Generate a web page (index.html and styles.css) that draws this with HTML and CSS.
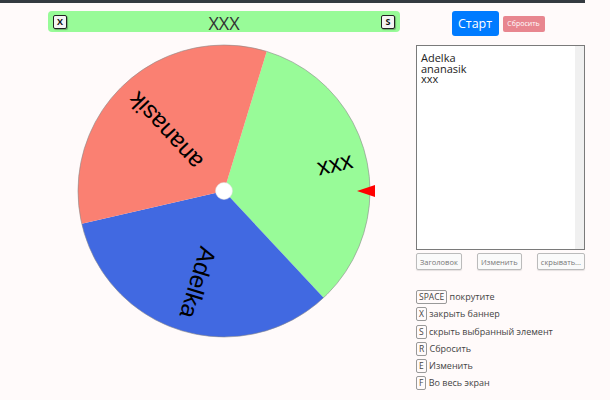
FILE: index.html
```html
<!DOCTYPE html>
<html lang="ru">
<head>
  <meta charset="UTF-8">
  <title>Колесо</title>
  <link rel="stylesheet" href="styles.css">
</head>
<body>
  <div class="top-bar"></div>
  <div class="page">
    <div class="wheel-col">
      <div class="banner">
        <span class="key-btn">X</span>
        <span class="banner-text">XXX</span>
        <span class="key-btn">S</span>
      </div>
      <svg class="wheel" width="352" height="320" viewBox="0 0 352 320">
        <!-- сектора по 120 градусов -->
        <path d="M176 154 L218.69 14.38 A146 146 0 0 1 275.57 260.78 Z" fill="#98fb98"/>
        <path d="M176 154 L275.57 260.78 A146 146 0 0 1 33.74 186.84 Z" fill="#4169e1"/>
        <path d="M176 154 L33.74 186.84 A146 146 0 0 1 218.69 14.38 Z" fill="#fa8072"/>
        <circle cx="176" cy="154" r="146" fill="none" stroke="#8a8a8a" stroke-width="0.6"/>
        <g class="wheel-label">
          <text transform="translate(176 154) rotate(-13)" x="132" text-anchor="end" dominant-baseline="middle">xxx</text>
          <text transform="translate(176 154) rotate(107)" x="132" text-anchor="end" dominant-baseline="middle">Adelka</text>
          <text transform="translate(176 154) rotate(227)" x="132" text-anchor="end" dominant-baseline="middle">ananasik</text>
        </g>
        <circle cx="176" cy="154" r="8.5" fill="#fff" stroke="#ddd" stroke-width="0.5"/>
        <polygon points="309,154 327,148 327,160" fill="#f00"/>
      </svg>
    </div>

    <div class="side-col">
      <div class="actions">
        <button class="btn-start">Старт</button>
        <button class="btn-reset">Сбросить</button>
      </div>
      <div class="names-box">
        <textarea class="names">Adelka
ananasik
xxx</textarea>
      </div>
      <div class="tools">
        <button class="btn-tool">Заголовок</button>
        <button class="btn-tool">Изменить</button>
        <button class="btn-tool">скрывать...</button>
      </div>
      <ul class="hotkeys">
        <li><kbd>SPACE</kbd> покрутите</li>
        <li><kbd>X</kbd> закрыть баннер</li>
        <li><kbd>S</kbd> скрыть выбранный элемент</li>
        <li><kbd>R</kbd> Сбросить</li>
        <li><kbd>E</kbd> Изменить</li>
        <li><kbd>F</kbd> Во весь экран</li>
      </ul>
    </div>
  </div>
</body>
</html>
```

FILE: styles.css
```css
body {
  margin: 0;
  padding: 0;
  background-color: #fffafa;
  font-family: "Open Sans", "Noto Sans", sans-serif;
}

.top-bar {
  width: 585px;
  height: 3px;
  background-color: #343a40;
}

.page {
  display: flex;
}

.wheel-col {
  width: 352px;
  margin-left: 48px;
  padding-top: 8px;
}

.banner {
  display: flex;
  align-items: center;
  justify-content: space-between;
  height: 21px;
  padding: 0 5px;
  background-color: #98fb98;
  border-radius: 4px;
}

.banner-text {
  font-size: 18px;
  color: #333;
  line-height: 21px;
  padding-top: 4px;
}

.key-btn {
  width: 12px;
  height: 12px;
  line-height: 12px;
  text-align: center;
  font-size: 9px;
  font-weight: 700;
  color: #111;
  background-color: #f4f4f4;
  border: 1.5px solid #222;
  border-radius: 2px;
  box-shadow: 1px 1px 1px rgba(0, 0, 0, 0.3);
}

.wheel {
  display: block;
  margin-top: 5px;
}

.wheel-label {
  font-family: "Liberation Sans", Arial, sans-serif;
  font-size: 24px;
  fill: #000;
}

.side-col {
  width: 169px;
  margin-left: 16px;
}

.actions {
  display: flex;
  justify-content: center;
  align-items: center;
  gap: 4px;
  margin-top: 8px;
  margin-left: -5px;
}

.btn-start {
  width: 47px;
  height: 25px;
  padding: 0;
  font-family: inherit;
  font-size: 12.5px;
  color: #fff;
  background-color: #007bff;
  border: 0;
  border-radius: 3px;
}

.btn-reset {
  width: 42px;
  height: 16px;
  padding: 0;
  font-family: inherit;
  font-size: 7px;
  color: #fff;
  background-color: #e8868f;
  border: 0;
  border-radius: 2px;
}

/* рамка поля со списком имён, полоса прокрутки справа */
.names-box {
  display: flex;
  box-sizing: border-box;
  width: 169px;
  height: 205px;
  margin-top: 9px;
  background-color: #fff;
  border: 1px solid #7a7a7a;
}

.names {
  flex: 1;
  padding: 7px 4px 0 4px;
  font-family: inherit;
  font-size: 11px;
  line-height: 10.7px;
  color: #222;
  background-color: #fff;
  border: 0;
  border-right: 9px solid #f0f0f0;
  resize: none;
  overflow: hidden;
  outline: none;
}

.tools {
  display: flex;
  justify-content: space-between;
  margin-top: 3px;
}

.btn-tool {
  height: 17px;
  padding: 0 3px;
  font-family: inherit;
  font-size: 7.5px;
  color: #777;
  background-color: #fafafa;
  border: 1px solid #bbb;
  border-radius: 2px;
  box-shadow: 0 1px 1px rgba(0, 0, 0, 0.1);
}

.hotkeys {
  list-style: none;
  margin: 20px 0 0 0;
  padding: 0;
}

.hotkeys li {
  height: 17.3px;
  font-size: 9px;
  line-height: 13px;
  color: #444;
}

kbd {
  display: inline-block;
  padding: 0 2px;
  font-family: inherit;
  font-size: 8.5px;
  line-height: 12px;
  color: #444;
  border: 1px solid #999;
  border-radius: 2px;
}
```
